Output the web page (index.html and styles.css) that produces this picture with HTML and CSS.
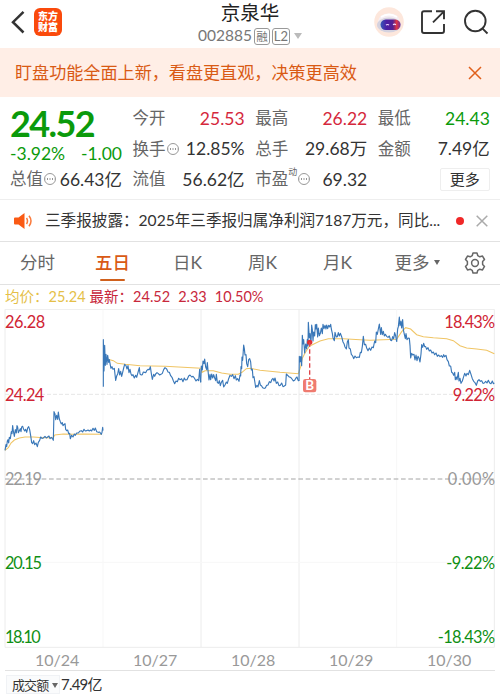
FILE: index.html
```
<!DOCTYPE html>
<html lang="zh-CN">
<head>
    <meta charset="UTF-8">
    <meta name="viewport" content="width=device-width, initial-scale=1.0">
    <title>京泉华 002885</title>
    <link rel="stylesheet" href="styles.css">
</head>
<body>
    <header class="header">
        <div class="header-left">
            <svg class="back" width="14" height="24" viewBox="0 0 14 24"><path d="M12.5 1.8 2 12.2l10.5 10.3"/></svg>
            <div class="logo"><span>东方</span><span>财富</span></div>
        </div>
        <div class="title">
            <h1>京泉华</h1>
            <div class="code">002885<span class="tag">融</span><span class="tag tag-l2">L2</span><i class="arrow"></i></div>
        </div>
        <div class="header-right">
            <svg width="30" height="30" viewBox="0 0 30 30">
                <defs>
                    <linearGradient id="visor"><stop offset="0" stop-color="#3558b8"/><stop offset=".3" stop-color="#4b1fa5"/><stop offset=".62" stop-color="#542092"/><stop offset=".8" stop-color="#dc3546"/><stop offset="1" stop-color="#7b2d94"/></linearGradient>
                </defs>
                <circle cx="15" cy="15" r="14.8" fill="#fde7dc"/>
                <ellipse cx="15" cy="14.5" rx="11" ry="8" fill="#f5eef3"/>
                <ellipse cx="15" cy="18" rx="12" ry="7.4" fill="#d5d2df"/>
                <path d="M7 10q8-5 16 0" fill="none" stroke="#fff" stroke-width="2"/>
                <rect x="6.5" y="12.5" width="20" height="10.5" rx="5.2" fill="url(#visor)"/>
                <path d="M12 18q1.5-1 3 0M19 17.7q1.5-1 3 0" fill="none" stroke="#f3dcff" stroke-width="1.2"/>
            </svg>
            <svg class="line-icon" width="26" height="26" viewBox="0 0 26 26"><path d="M12 2.3H4Q2 2.3 2 4.3V22q0 2 2 2h18q2 0 2-2v-7M16 2.3h8v8M24 2.3 13 13.3"/></svg>
            <svg class="line-icon" width="26" height="26" viewBox="0 0 26 26"><circle cx="12.3" cy="12" r="10.3"/><path d="m19.3 19.3 5.2 5.2"/></svg>
        </div>
    </header>

    <div class="banner">
        <span>盯盘功能全面上新，看盘更直观，决策更高效</span>
        <svg width="14" height="14" viewBox="0 0 14 14"><path d="m1 1 12 12M13 1 1 13"/></svg>
    </div>

    <section class="quote">
        <div class="col">
            <div class="price">24.52</div>
            <div class="row change"><span>-3.92%</span><span>-1.00</span></div>
            <div class="row"><label>总值<i class="info"></i></label><b>66.43亿</b></div>
        </div>
        <div class="col">
            <div class="row"><label>今开</label><b class="up">25.53</b></div>
            <div class="row"><label>换手<i class="info"></i></label><b>12.85%</b></div>
            <div class="row"><label>流值</label><b>56.62亿</b></div>
        </div>
        <div class="col">
            <div class="row"><label>最高</label><b class="up">26.22</b></div>
            <div class="row"><label>总手</label><b>29.68万</b></div>
            <div class="row"><label>市盈<sup>动</sup><i class="info"></i></label><b>69.32</b></div>
        </div>
        <div class="col">
            <div class="row"><label>最低</label><b class="down">24.43</b></div>
            <div class="row"><label>金额</label><b>7.49亿</b></div>
            <div class="row row-end"><button class="more">更多</button></div>
        </div>
    </section>

    <div class="news">
        <svg class="speaker" width="19" height="16" viewBox="0 0 19 16">
            <path class="speaker-body" d="M1 4.5h3.5L10.5 0v16L4.5 11.5H1Q0 11.5 0 10.5v-5q0-1 1-1z"/>
            <path class="speaker-wave" d="M12.5 5q2 3 0 6M15 2.8q4 5.2 0 10.4"/>
        </svg>
        <span class="news-text">三季报披露：2025年三季报归属净利润7187万元，同比...</span>
        <i class="dot"></i>
        <svg class="news-close" width="12" height="12" viewBox="0 0 12 12"><path d="m.7.7 10.6 10.6M11.3.7.7 11.3"/></svg>
    </div>

    <nav class="tabs">
        <span class="tab">分时</span>
        <span class="tab active">五日</span>
        <span class="tab">日K</span>
        <span class="tab">周K</span>
        <span class="tab">月K</span>
        <span class="tab">更多<i class="arrow arrow-dark"></i></span>
        <svg class="gear" width="22" height="22" viewBox="0 0 22 22">
            <path d="M9 1h4l.8 2.7 2 1.1 2.7-.7 2 3.4-1.9 2v2.9l1.9 2-2 3.5-2.7-.7-2 1.1L13 21H9l-.8-2.7-2-1.1-2.7.7-2-3.5 1.9-2V9.5l-1.9-2 2-3.4 2.7.7 2-1.1z"/>
            <circle cx="11" cy="11" r="3.4"/>
        </svg>
    </nav>

    <div class="legend">
        <span class="avg">均价：25.24</span>
        <span class="last">最新：24.52</span>
        <span class="last">2.33</span>
        <span class="last">10.50%</span>
    </div>

    <svg class="chart" width="500" height="339" viewBox="0 12 1500 1017">
        <g class="grid">
            <path d="M15 1027V13H1483V1027M603 13V1027M897 13V1027"/>
            <path class="faint" d="M309 13V1027M1190 13V1027M15 772H1483"/>
            <path class="dash-light" d="M15 268H1483"/>
            <path d="M15 1027H1483"/>
        </g>
        <path class="zero" d="M15 522H1483"/>

        <polyline class="avg-line" points="15,436 25,428 33,414 43,405 58,399 75,396 100,396 130,398 160,398 164,390 190,387 220,388 250,387 305,388"/>
        <polyline class="avg-line" points="311,150 322,162 340,167 352,175 376,178 420,182 495,184 603,190 606,202 615,197 640,197 665,204 690,208 715,208 726,202 739,191 752,190 780,196 840,202 895,206 902,185 907,160 915,144 928,124 940,118 960,108 985,101 1030,101 1080,104 1110,106 1190,103 1205,80 1217,68 1232,72 1250,89 1270,95 1300,98 1340,101 1360,107 1380,122 1400,129 1430,132 1460,136 1483,146"/>

        <!-- 10/24 -->
        <polyline class="price-line" points="15,436 18,419 20,425 22,408 24,404 26,414 28,397 31,401 34,380 36,386 38,362 40,378 43,394 46,374 49,384 51,362 53,366 55,383 58,377 61,371 63,380 65,366 68,364 71,373 74,378 77,373 80,382 83,369 86,365 89,374 92,392 95,413 98,416 101,407 104,419 108,414 112,425 115,412 119,406 122,396 126,400 130,399 135,394 139,399 143,396 147,393 150,401 154,397 158,402 160,406 162,320 165,327 167,344 170,331 173,343 175,321 178,342 181,350 184,357 187,353 189,362 192,359 195,356 197,373 200,377 203,375 206,386 209,385 211,401 215,391 219,396 223,387 226,391 230,384 235,384 239,379 244,377 248,381 252,373 256,378 260,377 264,375 268,378 272,375 275,378 279,370 283,376 286,369 290,380 295,382 299,381 304,388 306,382 308,367 309,377"/>
        <!-- 10/27 -->
        <polyline class="price-line" points="310,245 310,104 312,198 314,121 316,181 318,148 321,178 323,151 326,172 328,164 331,181 333,190 336,185 339,193 343,190 347,226 350,213 353,207 356,191 359,210 362,199 365,214 368,202 371,189 374,178 378,182 381,192 384,182 387,203 390,193 393,207 396,212 399,209 403,219 407,211 410,217 413,206 416,195 418,188 420,207 424,210 427,209 430,201 434,202 437,203 440,197 444,193 448,194 451,185 454,206 457,223 461,208 464,214 467,207 471,203 475,206 479,210 483,208 487,205 491,194 495,188 500,192 504,201 508,202 512,212 516,217 520,227 524,236 528,228 532,230 536,220 540,224 545,221 549,230 553,219 556,225 561,224 566,213 570,210 575,216 579,214 583,219 588,228 592,223 596,227 599,193 602,232"/>
        <!-- 10/28 -->
        <polyline class="price-line" points="602,232 604,183 607,195 609,168 612,176 614,162 617,186 620,194 622,173 625,207 627,225 630,208 632,224 635,207 638,219 641,209 644,219 647,227 649,208 652,232 655,235 658,227 661,242 664,232 668,226 671,246 675,240 679,231 682,235 686,221 690,211 694,214 698,209 702,221 706,212 709,225 713,221 717,229 720,210 722,213 723,185 725,191 726,156 728,166 731,120 733,131 735,150 738,149 740,176 743,185 746,164 749,161 752,171 754,195 757,193 759,218 762,215 765,234 767,247 771,241 774,246 778,227 781,240 785,243 788,248 792,250 796,249 800,241 804,240 808,230 812,233 816,223 819,220 822,228 825,219 829,235 833,231 837,242 841,241 845,234 849,245 853,243 857,240 859,207 863,211 868,216 872,217 876,222 880,228 884,226 888,219 891,216 894,225 897,228"/>
        <!-- 10/29 -->
        <polyline class="price-line" points="897,228 898,154 900,171 902,155 905,182 907,91 909,117 911,104 914,144 917,117 920,132 922,103 924,123 925,52 928,99 930,86 933,113 935,60 937,74 939,108 941,81 944,93 946,59 948,72 950,58 953,96 955,69 958,92 961,85 964,69 967,86 969,58 972,71 975,61 978,72 980,60 983,71 986,61 989,66 992,58 994,72 997,85 999,98 1003,107 1005,82 1009,96 1012,95 1015,83 1018,93 1021,85 1025,95 1029,111 1032,116 1035,126 1039,132 1042,111 1045,104 1047,129 1051,132 1054,148 1058,153 1061,161 1065,153 1069,158 1074,156 1078,157 1081,142 1084,143 1087,124 1090,94 1093,119 1097,118 1100,129 1104,137 1108,129 1112,136 1116,126 1120,128 1124,108 1127,113 1129,81 1132,88 1135,72 1138,57 1140,73 1142,88 1144,68 1147,89 1150,79 1153,93 1156,88 1160,94 1164,97 1168,93 1172,106 1175,107 1178,95 1181,101 1184,83 1187,93 1190,110"/>
        <!-- 10/30 -->
        <polyline class="price-line" points="1190,110 1193,72 1195,65 1198,36 1200,62 1203,48 1205,69 1208,44 1210,74 1213,88 1216,101 1218,86 1221,104 1225,99 1228,100 1230,121 1232,159 1235,145 1238,150 1242,148 1245,165 1248,150 1251,167 1254,154 1257,159 1260,171 1263,147 1265,119 1268,127 1271,115 1274,125 1277,125 1280,133 1284,128 1288,138 1292,135 1296,144 1300,141 1304,149 1308,144 1312,154 1316,150 1320,155 1324,152 1328,157 1331,149 1334,155 1338,151 1341,164 1345,170 1348,183 1352,183 1355,202 1358,204 1361,211 1364,202 1366,224 1369,216 1371,224 1375,202 1377,228 1380,220 1383,235 1387,228 1391,215 1394,205 1398,213 1401,205 1405,209 1409,196 1413,208 1417,221 1421,229 1425,233 1429,241 1433,228 1437,224 1441,229 1445,227 1449,235 1453,234 1457,229 1461,234 1465,226 1469,234 1473,236 1477,228 1480,236 1483,234"/>

        <circle class="buy-dot" cx="929" cy="112" r="8"/>
        <path class="buy-stem" d="M929 112V222"/>
        <rect class="buy-box" x="909" y="222" width="40" height="40" rx="7"/>
        <text class="buy-text" x="929" y="256" text-anchor="middle">B</text>

        <g class="axis">
            <text class="up" x="15" y="69" textLength="121">26.28</text>
            <text class="up" x="15" y="289" textLength="118">24.24</text>
            <text class="flat" x="15" y="541" textLength="111">22.19</text>
            <text class="down" x="15" y="793" textLength="111">20.15</text>
            <text class="down" x="15" y="1014" textLength="107">18.10</text>
            <text class="up" x="1333" y="69" textLength="152">18.43%</text>
            <text class="up" x="1358" y="289" textLength="127">9.22%</text>
            <text class="flat" x="1343" y="541" textLength="142">0.00%</text>
            <text class="down" x="1339" y="793" textLength="146">-9.22%</text>
            <text class="down" x="1313" y="1014" textLength="172">-18.43%</text>
        </g>
    </svg>

    <div class="dates">
        <span>10/24</span><span>10/27</span><span>10/28</span><span>10/29</span><span>10/30</span>
    </div>

    <div class="volume">
        <span class="volume-select">成交额<i class="arrow arrow-dark"></i></span>
        <span>7.49亿</span>
    </div>
</body>
</html>
```
FILE: styles.css
```
* {
    box-sizing: border-box;
}

body {
    margin: 0;
    width: 500px;
    height: 697px;
    overflow: hidden;
    background-color: #fff;
    color: #333;
    font-family: Lato, "Noto Sans CJK SC", sans-serif;
    line-height: 1;
}

svg {
    display: block;
    flex: none;
}

.header {
    height: 48px;
    display: grid;
    grid-template-columns: 1fr 130px 1fr;
    padding: 0 11px;
}

.header-left {
    display: flex;
    align-items: center;
    gap: 9px;
    padding-bottom: 5px;
}

.back {
    fill: none;
    stroke: #333;
    stroke-width: 2.5;
}

.logo {
    width: 28px;
    height: 28px;
    border-radius: 6px;
    background-color: #fa4a0c;
    color: #fff;
    display: flex;
    flex-direction: column;
    align-items: center;
    justify-content: center;
    font-size: 10px;
    font-weight: 900;
    line-height: 11px;
}

.title {
    display: flex;
    flex-direction: column;
    align-items: center;
}

h1 {
    margin: 2px 0 0;
    font-size: 19.5px;
    font-weight: 400;
    line-height: 22px;
    color: #222;
}

.code {
    display: flex;
    align-items: center;
    height: 20px;
    margin-top: 2px;
    font-size: 15.5px;
    color: #777;
    white-space: nowrap;
}

.tag {
    width: 16px;
    height: 17px;
    margin-left: 2px;
    border: 1px solid #999;
    border-radius: 3px;
    font-size: 11.5px;
    line-height: 15px;
    text-align: center;
}

.tag-l2 {
    width: 18px;
    font-size: 13px;
}

.arrow {
    display: inline-block;
    margin-left: 4px;
    border: 4.5px solid transparent;
    border-top: 6px solid #bbb;
    border-bottom: 0;
}

.header-right {
    display: flex;
    justify-content: flex-end;
    align-items: center;
    gap: 16px;
    padding-bottom: 5px;
}

.line-icon {
    fill: none;
    stroke: #333;
    stroke-width: 1.9;
}

.header-right .line-icon + .line-icon {
    margin-left: 1px;
}

.banner {
    height: 49px;
    padding: 0 18px 0 15px;
    background-color: #ffeee6;
    display: flex;
    align-items: center;
    justify-content: space-between;
    color: #d95a14;
    font-size: 17.1px;
}

.banner svg {
    fill: none;
    stroke: #e0601c;
    stroke-width: 1.5;
}

.quote {
    height: 102px;
    padding: 6px 10px 0;
    display: grid;
    grid-template-columns: repeat(4, 112px);
    column-gap: 10.6px;
}

.row {
    height: 30.5px;
    display: flex;
    align-items: center;
    justify-content: space-between;
    font-size: 17.5px;
    white-space: nowrap;
}

.row label {
    display: flex;
    align-items: center;
    font-size: 16.5px;
    color: #666;
}

.row b {
    font-weight: 400;
}

.row-end {
    justify-content: flex-end;
}

.price {
    height: 41px;
    font-size: 36px;
    font-weight: 700;
    line-height: 41px;
    letter-spacing: -1.6px;
    color: #0b9a0b;
}

.change {
    height: 20px;
    color: #0b9a0b;
}

.row b.up {
    color: #d5283c;
}

.row b.down {
    color: #0b9a0b;
}

.info {
    width: 12px;
    height: 12px;
    margin-left: 1px;
    border: 1px solid #999;
    border-radius: 50%;
    background: radial-gradient(circle, #888 0.7px, transparent 0.9px) center / 2.6px 10px repeat-x;
}

sup {
    align-self: flex-start;
    margin-top: -4px;
    font-size: 9px;
    line-height: 9px;
}

.more {
    width: 50px;
    height: 23px;
    padding: 0;
    border: 1px solid #eee;
    border-radius: 2px;
    background-color: #fff;
    color: #333;
    font-family: inherit;
    font-size: 15px;
    line-height: 20px;
}

.news {
    height: 43px;
    padding: 0 12px 0 14px;
    border-top: 1px solid #eee;
    border-bottom: 1px solid #e2e2e2;
    display: flex;
    align-items: center;
}

.speaker-body {
    fill: #fa5a14;
}

.speaker-wave {
    fill: none;
    stroke: #fa7a3c;
    stroke-width: 1.5;
}

.news-text {
    flex: 1;
    margin-left: 12px;
    font-size: 15.6px;
    white-space: nowrap;
}

.dot {
    width: 8px;
    height: 8px;
    margin-right: 12px;
    border-radius: 50%;
    background-color: #f02828;
}

.news-close {
    fill: none;
    stroke: #aaa;
    stroke-width: 1.5;
}

.tabs {
    height: 43px;
    border-bottom: 1px solid #e2e2e2;
    display: grid;
    grid-template-columns: repeat(5, 75px) 84px 32px;
    align-items: center;
    justify-items: center;
    font-size: 17.5px;
    color: #666;
}

.tab {
    height: 42px;
    line-height: 42px;
    white-space: nowrap;
}

.tab .arrow {
    margin-left: 4px;
    vertical-align: 4px;
}

.active {
    position: relative;
    color: #d95a14;
    font-weight: 500;
}

.active::after {
    content: "";
    position: absolute;
    left: 5px;
    right: 5px;
    bottom: 3px;
    height: 2.5px;
    border-radius: 2px;
    background-color: #d0601c;
}

.arrow-dark {
    border-width: 5px 3px 0;
    border-top-color: #666;
}

.gear {
    fill: none;
    stroke: #666;
    stroke-width: 1.5;
    stroke-linejoin: round;
}

.legend {
    height: 25px;
    padding-left: 5px;
    display: flex;
    align-items: center;
    font-size: 14.5px;
}

.avg {
    margin-right: 4px;
    color: #e5bf48;
}

.last {
    margin-right: 8px;
    color: #c8283c;
}

.chart {
    margin-top: -1px;
}

.grid path {
    fill: none;
    stroke: #ececec;
    stroke-width: 3;
}

.grid .faint {
    stroke: #f7f7f7;
}

.grid .dash-light {
    stroke: #e6e6e6;
    stroke-dasharray: 12 6;
}

.zero {
    stroke: #a4a4a4;
    stroke-width: 3;
    stroke-dasharray: 14 8;
}

.price-line {
    fill: none;
    stroke: #3977b8;
    stroke-width: 3.4;
    stroke-linejoin: round;
}

.avg-line {
    fill: none;
    stroke: #f0c565;
    stroke-width: 3.2;
}

.buy-dot {
    fill: #e02c32;
}

.buy-stem {
    stroke: #e0444a;
    stroke-width: 4;
    stroke-dasharray: 13 8;
}

.buy-box {
    fill: #ef7b70;
}

.buy-text {
    fill: #fff;
    font-size: 40px;
    font-weight: 700;
}

.axis {
    font-size: 49px;
}

.axis .up {
    fill: #d02434;
}

.axis .down {
    fill: #0f8f14;
}

.axis .flat {
    fill: #999;
}

.dates {
    height: 23px;
    margin: 0 5px;
    padding-top: 2px;
    border-bottom: 1px solid #e2e2e2;
    display: grid;
    grid-template-columns: repeat(5, 98px);
    align-items: center;
    font-size: 16px;
    color: #999;
}

.dates span {
    padding-left: 30px;
}

.volume {
    height: 26px;
    padding-left: 6px;
    display: flex;
    align-items: center;
    gap: 1px;
    font-size: 15px;
    letter-spacing: -0.8px;
}

.volume-select {
    width: 54px;
    height: 19px;
    padding-left: 5px;
    border: 1px solid #f0f2f5;
    background-color: #fafbfc;
    font-size: 13px;
    line-height: 18px;
    letter-spacing: -0.9px;
    white-space: nowrap;
}

.volume-select .arrow {
    margin-left: 4px;
    vertical-align: 2px;
}
```
